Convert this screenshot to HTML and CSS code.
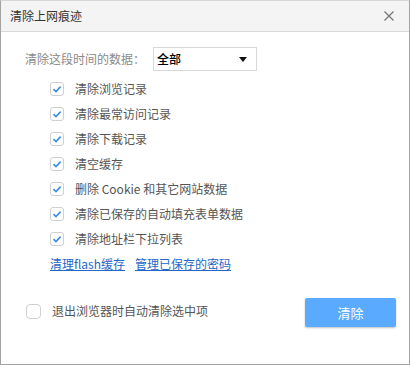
FILE: index.html
```html
<!DOCTYPE html>
<html>
<head>
<meta charset="utf-8">
<link rel="stylesheet" href="styles.css">
</head>
<body>
<div class="window">
  <div class="titlebar">
    <span class="title">清除上网痕迹</span>
    <svg class="close" width="10" height="10" viewBox="0 0 10 10"><path d="M0.5 0.5 L9.5 9.5 M9.5 0.5 L0.5 9.5" stroke="#777" stroke-width="1.3" fill="none"/></svg>
  </div>
  <div class="content">
    <div class="range">
      <span class="range-label">清除这段时间的数据：</span>
      <div class="select">
        <span>全部</span>
        <svg width="8" height="5" viewBox="0 0 8 5"><path d="M0 0 L8 0 L4 5 Z" fill="#111"/></svg>
      </div>
    </div>
    <ul class="options">
      <li><span class="cb checked"><svg width="14" height="14" viewBox="0 0 14 14"><path d="M3.5 7.2 L6 9.6 L10.6 4.6" stroke="#3a8ee6" stroke-width="1.6" fill="none"/></svg></span>清除浏览记录</li>
      <li><span class="cb checked"><svg width="14" height="14" viewBox="0 0 14 14"><path d="M3.5 7.2 L6 9.6 L10.6 4.6" stroke="#3a8ee6" stroke-width="1.6" fill="none"/></svg></span>清除最常访问记录</li>
      <li><span class="cb checked"><svg width="14" height="14" viewBox="0 0 14 14"><path d="M3.5 7.2 L6 9.6 L10.6 4.6" stroke="#3a8ee6" stroke-width="1.6" fill="none"/></svg></span>清除下载记录</li>
      <li><span class="cb checked"><svg width="14" height="14" viewBox="0 0 14 14"><path d="M3.5 7.2 L6 9.6 L10.6 4.6" stroke="#3a8ee6" stroke-width="1.6" fill="none"/></svg></span>清空缓存</li>
      <li><span class="cb checked"><svg width="14" height="14" viewBox="0 0 14 14"><path d="M3.5 7.2 L6 9.6 L10.6 4.6" stroke="#3a8ee6" stroke-width="1.6" fill="none"/></svg></span>删除 Cookie 和其它网站数据</li>
      <li><span class="cb checked"><svg width="14" height="14" viewBox="0 0 14 14"><path d="M3.5 7.2 L6 9.6 L10.6 4.6" stroke="#3a8ee6" stroke-width="1.6" fill="none"/></svg></span>清除已保存的自动填充表单数据</li>
      <li><span class="cb checked"><svg width="14" height="14" viewBox="0 0 14 14"><path d="M3.5 7.2 L6 9.6 L10.6 4.6" stroke="#3a8ee6" stroke-width="1.6" fill="none"/></svg></span>清除地址栏下拉列表</li>
    </ul>
    <div class="links">
      <a href="#">清理flash缓存</a>
      <a href="#">管理已保存的密码</a>
    </div>
  </div>
  <div class="footer">
    <label class="auto"><span class="cb"></span>退出浏览器时自动清除选中项</label>
    <button class="btn">清除</button>
  </div>
</div>
</body>
</html>
```
FILE: styles.css
```css
* { box-sizing: border-box; }
html, body { margin: 0; padding: 0; background: #fff; }
body {
  font-family: "Noto Sans CJK SC", "Microsoft YaHei", sans-serif;
  font-size: 12px;
}
.window {
  width: 410px;
  height: 365px;
  border: 1px solid #a3a3a3;
  border-top-color: #d6d6d6;
  display: flex;
  flex-direction: column;
  background: #fff;
}
.titlebar {
  height: 31px;
  flex: none;
  background: #f4f4f4;
  border-bottom: 1px solid #d9d9d9;
  display: flex;
  align-items: center;
  justify-content: space-between;
  padding: 0 15px 0 9px;
}
.title {
  color: #333;
  font-size: 12px;
  line-height: 16px;
}
.close { display: block; }
.content {
  padding: 15px 24px 0 24px;
}
.range {
  display: flex;
  align-items: center;
  height: 24px;
}
.range-label {
  color: #8a8a8a;
  width: 128px;
  line-height: 16px;
}
.select {
  width: 104px;
  height: 24px;
  border: 1px solid #d8d8d8;
  display: flex;
  align-items: center;
  justify-content: space-between;
  padding: 0 9px 0 3px;
  color: #000;
  font-weight: 500;
}
.select span { line-height: 16px; }
.options {
  list-style: none;
  margin: 5px 0 0 0;
  padding: 0 0 0 25px;
}
.options li {
  height: 25px;
  display: flex;
  align-items: center;
  color: #555;
  line-height: 16px;
}
.cb {
  width: 14px;
  height: 14px;
  border: 1px solid #cfcfcf;
  border-radius: 3px;
  margin-right: 11px;
  flex: none;
  position: relative;
  background: #fff;
}
.cb svg { position: absolute; left: -1px; top: -1px; }
.links {
  height: 25px;
  display: flex;
  align-items: center;
  gap: 10px;
  padding-left: 25px;
}
.links a {
  color: #2566c6;
  text-decoration: underline;
  line-height: 16px;
}
.footer {
  margin-top: 22px;
  display: flex;
  align-items: center;
  justify-content: space-between;
  padding: 0 13px 0 25px;
}
.auto {
  display: flex;
  align-items: center;
  color: #555;
  line-height: 16px;
  margin-top: -3px;
}
.auto .cb {
  width: 15px;
  height: 15px;
  border-radius: 4px;
  margin-right: 11px;
}
.btn {
  width: 91px;
  height: 29px;
  border: none;
  border-radius: 2px;
  background: #5aabff;
  color: #fff;
  font-family: inherit;
  font-size: 13px;
  box-shadow: 0 1px 2px rgba(0,0,0,0.25);
  padding: 0;
}
```
